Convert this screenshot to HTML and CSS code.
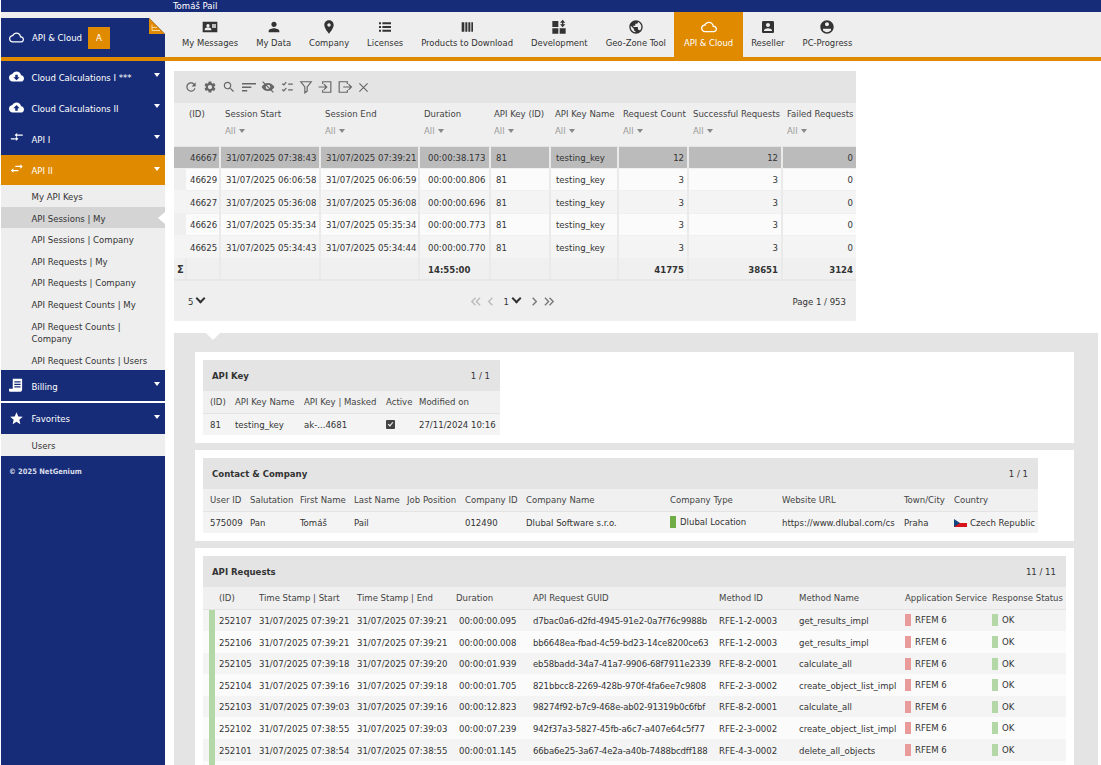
FILE: index.html
```html
<!DOCTYPE html>
<html lang="en">
<head>
    <meta charset="UTF-8">
    <title>API Sessions | My</title>
    <link rel="stylesheet" href="styles.css">
</head>
<body>
    <svg class="defs" width="0" height="0">
        <symbol id="i-cloud" viewBox="0 0 24 24"><path d="M19.35 10.04C18.67 6.59 15.64 4 12 4 9.11 4 6.6 5.64 5.35 8.04 2.34 8.36 0 10.91 0 14c0 3.31 2.69 6 6 6h13c2.76 0 5-2.24 5-5 0-2.64-2.05-4.78-4.65-4.96zM19 18H6c-2.21 0-4-1.79-4-4s1.79-4 4-4h.71C7.37 7.69 9.48 6 12 6c3.04 0 5.5 2.46 5.5 5.5v.5H19c1.66 0 3 1.34 3 3s-1.34 3-3 3z"/></symbol>
        <symbol id="i-down" viewBox="0 0 24 24"><path fill-rule="evenodd" d="M19.35 10.04C18.67 6.59 15.64 4 12 4 9.11 4 6.6 5.64 5.35 8.04 2.34 8.36 0 10.91 0 14c0 3.31 2.69 6 6 6h13c2.76 0 5-2.24 5-5 0-2.64-2.05-4.78-4.65-4.96zM17 13l-5 5-5-5h3V9h4v4h3z"/></symbol>
        <symbol id="i-up" viewBox="0 0 24 24"><path fill-rule="evenodd" d="M19.35 10.04C18.67 6.59 15.64 4 12 4 9.11 4 6.6 5.64 5.35 8.04 2.34 8.36 0 10.91 0 14c0 3.31 2.69 6 6 6h13c2.76 0 5-2.24 5-5 0-2.64-2.05-4.78-4.65-4.96zM14 13v4h-4v-4H7l5-5 5 5h-3z"/></symbol>
        <symbol id="i-merge" viewBox="0 0 24 24"><path d="M22 5.500h-9V3l-4 3.500 4 3.500V7.500h9zM3 11.500h8V9l4 3.500-4 3.500v-2.500H3z"/></symbol>
        <symbol id="i-swap" viewBox="0 0 24 24"><path d="M10 4.500h8V2l4 3.500L18 9V6.500h-8zM15 11H7V8.500L3 12l4 3.500V13h8z"/></symbol>
        <symbol id="i-bill" viewBox="0 0 24 24"><path fill-rule="evenodd" d="M6 1h15v17c0 2-1 4-3 4H2c-1.500 0-2-1-2-2v-3h6zM8.500 5v2h10V5zM8.500 9v2h10V9zM8.500 13v2h10v-2z"/></symbol>
        <symbol id="i-star" viewBox="0 0 24 24"><path d="M12 17.27L18.18 21l-1.64-7.03L22 9.24l-7.19-.61L12 2 9.19 8.63 2 9.24l5.46 4.73L5.82 21z"/></symbol>
        <symbol id="i-msg" viewBox="0 0 24 24"><path fill-rule="evenodd" d="M1 4h22v16H1zM9 7.500a2.500 2.500 0 1 0 .01 0zM4 17h10v-1.500c0-2-3-3-5-3s-5 1-5 3zM15 8v2h6V8zM15 11v2h6v-2z"/></symbol>
        <symbol id="i-person" viewBox="0 0 24 24"><path d="M12 12c2.21 0 4-1.79 4-4s-1.79-4-4-4-4 1.790-4 4 1.790 4 4 4zm0 2c-2.670 0-8 1.340-8 4v2h16v-2c0-2.660-5.330-4-8-4z"/></symbol>
        <symbol id="i-place" viewBox="0 0 24 24"><path d="M12 2C8.130 2 5 5.130 5 9c0 5.250 7 13 7 13s7-7.750 7-13c0-3.870-3.130-7-7-7zm0 9.500c-1.380 0-2.500-1.120-2.500-2.500s1.120-2.500 2.500-2.500 2.500 1.120 2.500 2.500-1.120 2.500-2.500 2.500z"/></symbol>
        <symbol id="i-list" viewBox="0 0 24 24"><path d="M3 5h3v3H3zM8 5h13v3H8zM3 10.500h3v3H3zM8 10.500h13v3H8zM3 16h3v3H3zM8 16h13v3H8z"/></symbol>
        <symbol id="i-columns" viewBox="0 0 24 24"><path d="M4 5h4v14H4zM9.500 5h3v14h-3zM14 5h3v14h-3zM18.500 5H21v14h-2.500z"/></symbol>
        <symbol id="i-dev" viewBox="0 0 24 24"><path d="M2 3h9v9H2zM2 14h9v8H2zM13 14h9v8h-9zM17.500 1l4 4.500h-3V8h3l-4 4.500-4-4.500h3V5.500h-3z"/></symbol>
        <symbol id="i-globe" viewBox="0 0 24 24"><path d="M12 2C6.480 2 2 6.480 2 12s4.480 10 10 10 10-4.480 10-10S17.520 2 12 2zm-1 17.930c-3.950-.490-7-3.850-7-7.930 0-.620.080-1.210.210-1.790L9 15v1c0 1.100.900 2 2 2v1.930zm6.900-2.540c-.260-.810-1-1.390-1.900-1.390h-1v-3c0-.550-.450-1-1-1H8v-2h2c.550 0 1-.450 1-1V7h2c1.100 0 2-.900 2-2v-.410c2.930 1.190 5 4.060 5 7.410 0 2.080-.800 3.970-2.100 5.390z"/></symbol>
        <symbol id="i-box" viewBox="0 0 24 24"><path d="M3 5v14c0 1.100.890 2 2 2h14c1.100 0 2-.900 2-2V5c0-1.100-.900-2-2-2H5c-1.110 0-2 .900-2 2zm12 4c0 1.660-1.340 3-3 3s-3-1.340-3-3 1.340-3 3-3 3 1.340 3 3zm-9 8c0-2 4-3.100 6-3.100s6 1.100 6 3.100v1H6v-1z"/></symbol>
        <symbol id="i-account" viewBox="0 0 24 24"><path fill-rule="evenodd" d="M12 2C6.480 2 2 6.480 2 12s4.480 10 10 10 10-4.480 10-10S17.520 2 12 2zm0 3c1.660 0 3 1.340 3 3s-1.340 3-3 3-3-1.340-3-3 1.340-3 3-3zM6 14.500h12v2.500c-1.300 1.700-3.500 2.700-6 2.700s-4.700-1-6-2.700z"/></symbol>
        <symbol id="i-refresh" viewBox="0 0 24 24"><path d="M17.650 6.350C16.200 4.900 14.210 4 12 4c-4.420 0-7.990 3.580-7.990 8s3.570 8 7.990 8c3.730 0 6.840-2.550 7.730-6h-2.080c-.820 2.330-3.040 4-5.650 4-3.310 0-6-2.690-6-6s2.690-6 6-6c1.660 0 3.140.690 4.220 1.780L13 11h7V4l-2.350 2.350z"/></symbol>
        <symbol id="i-gear" viewBox="0 0 24 24"><path d="M19.140 12.940c.040-.3.060-.610.060-.940 0-.320-.020-.640-.070-.940l2.030-1.580c.180-.140.230-.410.120-.610l-1.920-3.320c-.120-.220-.370-.290-.590-.220l-2.390.960c-.5-.380-1.030-.7-1.620-.94l-.360-2.540c-.040-.240-.240-.410-.480-.410h-3.840c-.240 0-.430.170-.470.410l-.360 2.540c-.590.240-1.130.570-1.620.94l-2.390-.960c-.220-.080-.470 0-.590.220L2.740 8.870c-.120.210-.080.470.120.610l2.030 1.580c-.050.3-.090.630-.090.940s.020.640.070.940l-2.030 1.580c-.180.140-.230.410-.120.610l1.920 3.320c.120.220.370.290.590.220l2.390-.960c.5.380 1.030.7 1.620.94l.360 2.540c.050.240.240.410.480.410h3.840c.240 0 .440-.170.470-.410l.360-2.540c.590-.240 1.130-.560 1.620-.94l2.390.96c.220.080.470 0 .590-.220l1.920-3.320c.120-.220.070-.470-.120-.610l-2.010-1.580zM12 15.600c-1.980 0-3.600-1.620-3.600-3.600s1.620-3.600 3.600-3.600 3.600 1.620 3.600 3.600-1.620 3.600-3.600 3.600z"/></symbol>
        <symbol id="i-search" viewBox="0 0 24 24"><path d="M15.500 14h-.790l-.280-.270C15.410 12.590 16 11.110 16 9.500 16 5.910 13.090 3 9.500 3S3 5.910 3 9.500 5.910 16 9.500 16c1.610 0 3.090-.590 4.230-1.570l.270.280v.790l5 4.990L20.490 19l-4.990-5zm-6 0C7.010 14 5 11.990 5 9.500S7.010 5 9.500 5 14 7.010 14 9.500 11.990 14 9.500 14z"/></symbol>
        <symbol id="i-sort" viewBox="0 0 24 24"><path d="M0 5h24v2.500H0zM0 11h16v2.500H0zM0 17h9v2.500H0z"/></symbol>
        <symbol id="i-eye" viewBox="0 0 24 24"><path fill-rule="evenodd" d="M12 5C7 5 3 8 1 12c2 4 6 7 11 7s9-3 11-7c-2-4-6-7-11-7zm0 3a4 4 0 1 1 0 8 4 4 0 0 1 0-8z"/><path d="M3.500 2L22 20.500 20.500 22 2 3.500z"/></symbol>
        <symbol id="i-check" viewBox="0 0 24 24"><path d="M3 7l2-1.500 1.500 1.500L10 3l1.500 1.500-5 5.500zM3 17l2-1.500 1.500 1.500L10 13l1.500 1.500-5 5.500zM14 6h8v2h-8zM14 16h8v2h-8z"/></symbol>
        <symbol id="i-filter" viewBox="0 0 24 24"><path fill="none" stroke="currentColor" stroke-width="2" d="M3 3h18l-7 9v7l-4 3V12z"/></symbol>
        <symbol id="i-login" viewBox="0 0 24 24"><path fill="none" stroke="currentColor" stroke-width="2" d="M8 7V3h14v18H8v-4M1 12h13M10 7l5 5-5 5"/></symbol>
        <symbol id="i-logout" viewBox="0 0 24 24"><path fill="none" stroke="currentColor" stroke-width="2" d="M16 7V3H2v18h14v-4M9 12h13M18 7l5 5-5 5"/></symbol>
        <symbol id="i-close" viewBox="0 0 24 24"><path fill="none" stroke="currentColor" stroke-width="2.500" d="M3 3l18 18M21 3L3 21"/></symbol>
        <symbol id="i-first" viewBox="0 0 12 12"><path fill="none" stroke="currentColor" stroke-width="1.500" d="M6 2L2 6l4 4M11 2L7 6l4 4"/></symbol>
        <symbol id="i-prev" viewBox="0 0 12 12"><path fill="none" stroke="currentColor" stroke-width="1.500" d="M8 2L4 6l4 4"/></symbol>
        <symbol id="i-next" viewBox="0 0 12 12"><path fill="none" stroke="currentColor" stroke-width="1.500" d="M4 2l4 4-4 4"/></symbol>
        <symbol id="i-last" viewBox="0 0 12 12"><path fill="none" stroke="currentColor" stroke-width="1.500" d="M1 2l4 4-4 4M6 2l4 4-4 4"/></symbol>
    </svg>

    <div class="topbar">Tomáš Pail</div>

    <div class="header">
        <div class="brand">
            <svg class="brand-icon"><use href="#i-cloud"/></svg>
            <span>API &amp; Cloud</span>
            <span class="brand-badge">A</span>
            <svg class="brand-fold" viewBox="0 0 16 16"><path fill="#eeeeee" d="M0 0h16v16z"/><path fill="#e08a00" d="M0 0l16 16H0z"/><path fill="none" stroke="#f6d59a" d="M3 6.500v6M3 9.500h5M3 12.500h8"/></svg>
        </div>
        <div class="nav">
            <a class="nav-item"><svg><use href="#i-msg"/></svg>My Messages</a>
            <a class="nav-item"><svg><use href="#i-person"/></svg>My Data</a>
            <a class="nav-item"><svg><use href="#i-place"/></svg>Company</a>
            <a class="nav-item"><svg><use href="#i-list"/></svg>Licenses</a>
            <a class="nav-item"><svg><use href="#i-columns"/></svg>Products to Download</a>
            <a class="nav-item"><svg><use href="#i-dev"/></svg>Development</a>
            <a class="nav-item"><svg><use href="#i-globe"/></svg>Geo-Zone Tool</a>
            <a class="nav-item active"><svg><use href="#i-cloud"/></svg>API &amp; Cloud</a>
            <a class="nav-item"><svg><use href="#i-box"/></svg>Reseller</a>
            <a class="nav-item"><svg><use href="#i-account"/></svg>PC-Progress</a>
        </div>
    </div>

    <div class="layout">
        <div class="sidebar">
            <div class="menu-item"><svg><use href="#i-down"/></svg>Cloud Calculations I ***<i class="caret"></i></div>
            <div class="menu-item"><svg><use href="#i-up"/></svg>Cloud Calculations II<i class="caret"></i></div>
            <div class="menu-item tall"><svg><use href="#i-merge"/></svg>API I<i class="caret"></i></div>
            <div class="menu-item short open"><svg><use href="#i-swap"/></svg>API II<i class="caret"></i></div>
            <div class="submenu">
                <div class="sub-item">My API Keys</div>
                <div class="sub-item selected">API Sessions | My</div>
                <div class="sub-item">API Sessions | Company</div>
                <div class="sub-item">API Requests | My</div>
                <div class="sub-item">API Requests | Company</div>
                <div class="sub-item">API Request Counts | My</div>
                <div class="sub-item wrap">API Request Counts | Company</div>
                <div class="sub-item">API Request Counts | Users</div>
            </div>
            <div class="menu-item"><svg><use href="#i-bill"/></svg>Billing<i class="caret"></i></div>
            <div class="menu-item gap"><svg><use href="#i-star"/></svg>Favorites<i class="caret"></i></div>
            <div class="submenu">
                <div class="sub-item">Users</div>
            </div>
            <div class="copyright">© 2025 NetGenium</div>
        </div>

        <div class="content">
            <div class="grid">
                <div class="toolbar">
                    <svg><use href="#i-refresh"/></svg>
                    <svg><use href="#i-gear"/></svg>
                    <svg><use href="#i-search"/></svg>
                    <svg><use href="#i-sort"/></svg>
                    <svg><use href="#i-eye"/></svg>
                    <svg><use href="#i-check"/></svg>
                    <svg><use href="#i-filter"/></svg>
                    <svg><use href="#i-login"/></svg>
                    <svg><use href="#i-logout"/></svg>
                    <svg class="toolbar-close"><use href="#i-close"/></svg>
                </div>
                <table class="sessions">
                    <colgroup>
                        <col class="w12"><col class="w34"><col class="w100"><col class="w99"><col class="w71"><col class="w60"><col class="w68"><col class="w70"><col class="w94"><col class="w74">
                    </colgroup>
                    <thead>
                        <tr>
                            <th></th>
                            <th class="tight">(ID)<span class="filter"></span></th>
                            <th>Session Start<span class="filter">All<i></i></span></th>
                            <th>Session End<span class="filter">All<i></i></span></th>
                            <th>Duration<span class="filter">All<i></i></span></th>
                            <th class="narrow">API Key (ID)<span class="filter">All<i></i></span></th>
                            <th>API Key Name<span class="filter">All<i></i></span></th>
                            <th>Request Count<span class="filter">All<i></i></span></th>
                            <th>Successful Requests<span class="filter">All<i></i></span></th>
                            <th>Failed Requests<span class="filter">All<i></i></span></th>
                        </tr>
                    </thead>
                    <tbody>
                        <tr class="current"><td class="gutter"></td><td class="id">46667</td><td>31/07/2025 07:38:43</td><td>31/07/2025 07:39:21</td><td class="dur">00:00:38.173</td><td>81</td><td>testing_key</td><td class="num">12</td><td class="num">12</td><td class="num">0</td></tr>
                        <tr><td class="gutter"></td><td class="id">46629</td><td>31/07/2025 06:06:58</td><td>31/07/2025 06:06:59</td><td class="dur">00:00:00.806</td><td>81</td><td>testing_key</td><td class="num">3</td><td class="num">3</td><td class="num">0</td></tr>
                        <tr class="high"><td class="gutter"></td><td class="id">46627</td><td>31/07/2025 05:36:08</td><td>31/07/2025 05:36:08</td><td class="dur">00:00:00.696</td><td>81</td><td>testing_key</td><td class="num">3</td><td class="num">3</td><td class="num">0</td></tr>
                        <tr><td class="gutter"></td><td class="id">46626</td><td>31/07/2025 05:35:34</td><td>31/07/2025 05:35:34</td><td class="dur">00:00:00.773</td><td>81</td><td>testing_key</td><td class="num">3</td><td class="num">3</td><td class="num">0</td></tr>
                        <tr class="high"><td class="gutter"></td><td class="id">46625</td><td>31/07/2025 05:34:43</td><td>31/07/2025 05:34:44</td><td class="dur">00:00:00.770</td><td>81</td><td>testing_key</td><td class="num">3</td><td class="num">3</td><td class="num">0</td></tr>
                        <tr class="sum"><td class="sigma">Σ</td><td></td><td></td><td></td><td class="dur">14:55:00</td><td></td><td></td><td class="num">41775</td><td class="num">38651</td><td class="num">3124</td></tr>
                    </tbody>
                </table>
                <div class="pager">
                    <span class="pager-size">5<i class="chev"></i></span>
                    <span class="pager-links">
                        <svg class="off"><use href="#i-first"/></svg>
                        <svg class="off"><use href="#i-prev"/></svg>
                        <span class="pager-page">1<i class="chev"></i></span>
                        <svg><use href="#i-next"/></svg>
                        <svg><use href="#i-last"/></svg>
                    </span>
                    <span class="pager-info">Page 1 / 953</span>
                </div>
            </div>

            <div class="details">
                <div class="card">
                    <div class="block key-block">
                        <div class="block-title"><b>API Key</b><span>1 / 1</span></div>
                        <table class="data">
                            <colgroup><col class="w28"><col class="w69"><col class="w82"><col class="w33"><col class="w85"></colgroup>
                            <thead><tr><th class="first">(ID)</th><th>API Key Name</th><th>API Key | Masked</th><th>Active</th><th>Modified on</th></tr></thead>
                            <tbody><tr><td class="first">81</td><td>testing_key</td><td>ak-...4681</td><td><span class="checkbox"></span></td><td>27/11/2024 10:16</td></tr></tbody>
                        </table>
                    </div>
                </div>
                <div class="card">
                    <div class="block contact-block">
                        <div class="block-title"><b>Contact &amp; Company</b><span>1 / 1</span></div>
                        <table class="data">
                            <colgroup><col class="w43"><col class="w50"><col class="w54"><col class="w53"><col class="w58"><col class="w61"><col class="w144"><col class="w112"><col class="w122"><col class="w50"><col class="w88"></colgroup>
                            <thead><tr><th class="first">User ID</th><th>Salutation</th><th>First Name</th><th>Last Name</th><th>Job Position</th><th>Company ID</th><th>Company Name</th><th>Company Type</th><th>Website URL</th><th>Town/City</th><th>Country</th></tr></thead>
                            <tbody><tr><td class="first">575009</td><td>Pan</td><td>Tomáš</td><td>Pail</td><td></td><td>012490</td><td>Dlubal Software s.r.o.</td><td><span class="swatch strong"></span>Dlubal Location</td><td class="url">https://www.dlubal.com/cs</td><td>Praha</td><td><svg class="flag" viewBox="0 0 13 8"><path fill="#f4f4f4" d="M0 0h13v4H0z"/><path fill="#d7141a" d="M0 4h13v4H0z"/><path fill="#11457e" d="M0 0l6 4-6 4z"/></svg>Czech Republic</td></tr></tbody>
                        </table>
                    </div>
                </div>
                <div class="card">
                    <div class="block requests-block">
                        <div class="block-title"><b>API Requests</b><span>11 / 11</span></div>
                        <table class="data">
                            <colgroup><col class="w6"><col class="w6"><col class="w40"><col class="w98"><col class="w99"><col class="w77"><col class="w186"><col class="w80"><col class="w106"><col class="w87"><col class="w78"></colgroup>
                            <thead><tr><th class="plain"></th><th class="plain"></th><th>(ID)</th><th>Time Stamp | Start</th><th>Time Stamp | End</th><th>Duration</th><th>API Request GUID</th><th>Method ID</th><th>Method Name</th><th>Application Service</th><th>Response Status</th></tr></thead>
                            <tbody>
                                <tr><td class="plain"></td><td class="bar"></td><td>252107</td><td>31/07/2025 07:39:21</td><td>31/07/2025 07:39:21</td><td class="dur">00:00:00.095</td><td class="guid">d7bac0a6-d2fd-4945-91e2-0a7f76c9988b</td><td>RFE-1-2-0003</td><td>get_results_impl</td><td><span class="swatch red"></span>RFEM 6</td><td><span class="swatch green"></span>OK</td></tr>
                                <tr><td class="plain"></td><td class="bar"></td><td>252106</td><td>31/07/2025 07:39:21</td><td>31/07/2025 07:39:21</td><td class="dur">00:00:00.008</td><td class="guid">bb6648ea-fbad-4c59-bd23-14ce8200ce63</td><td>RFE-1-2-0003</td><td>get_results_impl</td><td><span class="swatch red"></span>RFEM 6</td><td><span class="swatch green"></span>OK</td></tr>
                                <tr class="low"><td class="plain"></td><td class="bar"></td><td>252105</td><td>31/07/2025 07:39:18</td><td>31/07/2025 07:39:20</td><td class="dur">00:00:01.939</td><td class="guid">eb58badd-34a7-41a7-9906-68f7911e2339</td><td>RFE-8-2-0001</td><td>calculate_all</td><td><span class="swatch red"></span>RFEM 6</td><td><span class="swatch green"></span>OK</td></tr>
                                <tr><td class="plain"></td><td class="bar"></td><td>252104</td><td>31/07/2025 07:39:16</td><td>31/07/2025 07:39:18</td><td class="dur">00:00:01.705</td><td class="guid">821bbcc8-2269-428b-970f-4fa6ee7c9808</td><td>RFE-2-3-0002</td><td>create_object_list_impl</td><td><span class="swatch red"></span>RFEM 6</td><td><span class="swatch green"></span>OK</td></tr>
                                <tr class="low"><td class="plain"></td><td class="bar"></td><td>252103</td><td>31/07/2025 07:39:03</td><td>31/07/2025 07:39:16</td><td class="dur">00:00:12.823</td><td class="guid">98274f92-b7c9-468e-ab02-91319b0c6fbf</td><td>RFE-8-2-0001</td><td>calculate_all</td><td><span class="swatch red"></span>RFEM 6</td><td><span class="swatch green"></span>OK</td></tr>
                                <tr><td class="plain"></td><td class="bar"></td><td>252102</td><td>31/07/2025 07:38:55</td><td>31/07/2025 07:39:03</td><td class="dur">00:00:07.239</td><td class="guid">942f37a3-5827-45fb-a6c7-a407e64c5f77</td><td>RFE-2-3-0002</td><td>create_object_list_impl</td><td><span class="swatch red"></span>RFEM 6</td><td><span class="swatch green"></span>OK</td></tr>
                                <tr><td class="plain"></td><td class="bar"></td><td>252101</td><td>31/07/2025 07:38:54</td><td>31/07/2025 07:38:55</td><td class="dur">00:00:01.145</td><td class="guid">66ba6e25-3a67-4e2a-a40b-7488bcdff188</td><td>RFE-4-3-0002</td><td>delete_all_objects</td><td><span class="swatch red"></span>RFEM 6</td><td><span class="swatch green"></span>OK</td></tr>
                                <tr><td class="plain"></td><td class="bar"></td><td></td><td></td><td></td><td></td><td></td><td></td><td></td><td></td><td></td></tr>
                            </tbody>
                        </table>
                    </div>
                </div>
            </div>
        </div>
    </div>
</body>
</html>
```

FILE: styles.css
```css
html, body {
    height: 100%;
    overflow: hidden;
}
body {
    margin: 0;
    padding-left: 1px;
    background: #fff;
    color: #333;
    font-family: "DejaVu Sans", Verdana, sans-serif;
    font-stretch: condensed;
    font-size: 9.5px;
    box-sizing: border-box;
}
.defs {
    position: absolute;
}
svg {
    fill: currentColor;
}

/* top */
.topbar {
    height: 12px;
    background: #172c78;
    color: #fff;
    padding-left: 172px;
    line-height: 11px;
    overflow: hidden;
}
.header {
    display: flex;
    height: 45px;
    background: #eee;
    box-shadow: 0 4px 0 #e08a00;
    position: relative;
}
.brand {
    width: 164px;
    margin-top: 6px;
    background: #172c78;
    color: #fff;
    display: flex;
    align-items: center;
    position: relative;
    box-sizing: border-box;
    padding-left: 8px;
}
.brand-icon {
    width: 15px;
    height: 15px;
    margin-right: 8px;
}
.brand-badge {
    width: 22px;
    height: 22px;
    margin-left: 6px;
    background: #e08a00;
    display: flex;
    align-items: center;
    justify-content: center;
}
.brand-fold {
    position: absolute;
    top: 0;
    right: 0;
    width: 16px;
    height: 16px;
}
.nav {
    display: flex;
    padding-left: 8px;
    font-size: 9.35px;
}
.nav-item {
    display: flex;
    flex-direction: column;
    align-items: center;
    padding: 7px 9px 0;
    color: #333;
    white-space: nowrap;
}
.nav-item svg {
    width: 16px;
    height: 16px;
    margin-bottom: 2px;
}
.nav-item.active {
    background: #e08a00;
    color: #fff;
    margin: 0 -1px;
    padding: 7px 10px 0;
}

/* sidebar */
.layout {
    display: flex;
    margin-top: 4px;
    height: 704px;
}
.sidebar {
    width: 164px;
    flex-shrink: 0;
    background: #172c78;
    color: #fff;
}
.menu-item {
    height: 31px;
    display: flex;
    align-items: center;
    padding: 1px 0 0 30.5px;
    position: relative;
    box-sizing: border-box;
}
.menu-item svg {
    position: absolute;
    left: 8px;
    top: 8px;
    width: 15px;
    height: 15px;
}
.menu-item.tall {
    height: 32px;
}
.menu-item.short {
    height: 30px;
}
.menu-item.open {
    background: #e08a00;
}
.menu-item.gap {
    border-top: 2px solid #fff;
    height: 33px;
    padding-top: 0;
}
.caret {
    position: absolute;
    right: 5px;
    top: 12px;
    border: 3px solid transparent;
    border-top: 4px solid #fff;
}
.submenu {
    background: #eee;
    color: #333;
}
.sub-item {
    height: 21.5px;
    line-height: 23px;
    padding-left: 30.5px;
    position: relative;
}
.sub-item.wrap {
    height: 34.5px;
    line-height: 12px;
    padding: 6.5px 30px 0 30.5px;
    box-sizing: border-box;
}
.sub-item.selected {
    background: #d4d4d4;
}
.sub-item.selected::after {
    content: "";
    position: absolute;
    right: 0;
    top: 5px;
    border: 6px solid transparent;
    border-right: 7px solid #fff;
    border-left: 0;
}
.copyright {
    padding: 11px 0 0 8px;
    font-size: 7.5px;
    font-weight: bold;
    color: #d8dcea;
}

/* sessions grid */
.content {
    flex: 1;
    padding: 10px 0 0 9px;
}
.grid {
    width: 682px;
    background: #efefef;
    margin-bottom: 12px;
}
.toolbar {
    height: 32px;
    background: #e4e4e4;
    display: flex;
    align-items: center;
    gap: 5.2px;
    padding-left: 10px;
    color: #666;
}
.toolbar svg {
    width: 14px;
    height: 14px;
}
.toolbar svg.toolbar-close {
    width: 11px;
    height: 11px;
    margin-left: 1px;
}
table {
    border-collapse: collapse;
    table-layout: fixed;
    width: 100%;
}
.sessions thead th {
    height: 43px;
    vertical-align: top;
    padding: 5px 0 0 5px;
    font-weight: normal;
    text-align: left;
    line-height: 12px;
    white-space: nowrap;
    color: #444;
    border-bottom: 1px solid #e4e4e4;
    box-sizing: border-box;
}
.sessions th.tight {
    padding-left: 3px;
}
.sessions th.narrow {
    padding-left: 4px;
}
.filter {
    display: block;
    margin-top: 5px;
    color: #999;
}
.filter i {
    display: inline-block;
    margin-left: 3px;
    border: 3px solid transparent;
    border-top: 4px solid #888;
    border-bottom: 0;
    vertical-align: 1px;
}
.sessions td {
    height: 22px;
    padding: 1px 0 0 5px;
    border-left: 2px solid #eaeaea;
    border-bottom: 1px solid #f0f0f0;
    white-space: nowrap;
    box-sizing: border-box;
    background: #fbfbfb;
}
.sessions tr.high td {
    height: 23px;
}
.sessions tbody tr:nth-child(odd) td {
    background: #f4f4f4;
}
.sessions tbody tr.current td {
    background: #bbb;
}
.sessions tbody td.gutter {
    background: #efefef;
    border: 0;
}
.sessions td.id {
    border-left: 0;
    padding-left: 4px;
}
.sessions td.dur {
    padding-left: 8px;
}
.sessions td.num {
    text-align: right;
    padding-right: 3px;
}
.sessions tbody tr.sum td {
    background: #f0f0f0;
    font-weight: bold;
    border-bottom: 2px solid #e8e8e8;
}
.sessions tr.sum td.sigma {
    padding-left: 3px;
    border-left: 0;
    font-size: 11px;
}
.pager {
    height: 40px;
    display: flex;
    align-items: center;
    justify-content: space-between;
    padding: 0 10px 0 14px;
    position: relative;
}
.chev {
    display: inline-block;
    width: 5px;
    height: 5px;
    margin-left: 4px;
    border-right: 2px solid #333;
    border-bottom: 2px solid #333;
    transform: rotate(45deg);
    vertical-align: 3px;
}
.pager-links {
    position: absolute;
    left: 296px;
    display: flex;
    align-items: center;
    gap: 4px;
    color: #777;
}
.pager-links svg {
    width: 11px;
    height: 11px;
}
.pager-links .off {
    color: #bbb;
}
.pager-page {
    color: #333;
    width: 24.5px;
    padding-left: 3.5px;
    box-sizing: border-box;
}

/* details panel */
.details {
    width: 924px;
    background: #e4e4e4;
    padding: 19px 24px 0 21px;
    box-sizing: border-box;
    position: relative;
}
.details::before {
    content: "";
    position: absolute;
    left: 32px;
    top: 0;
    border: 7px solid transparent;
    border-top: 7px solid #fff;
    border-bottom: 0;
}
.card {
    background: #fff;
    padding: 8px;
    margin-bottom: 7px;
}
.block-title {
    height: 31px;
    background: #e4e4e4;
    display: flex;
    align-items: center;
    justify-content: space-between;
    padding: 0 10px 0 9px;
}
.key-block {
    width: 297px;
}
.contact-block {
    width: 835px;
}
.data th {
    height: 22px;
    background: #f0f0f0;
    border-bottom: 1px solid #e4e4e4;
    font-weight: normal;
    text-align: left;
    padding: 0 0 0 4px;
    color: #444;
    white-space: nowrap;
    box-sizing: border-box;
}
.data td {
    height: 22px;
    background: #f4f4f4;
    padding: 0 0 0 4px;
    white-space: nowrap;
    overflow: hidden;
    box-sizing: border-box;
}
.data .first {
    padding-left: 7px;
}
.requests-block tr.low td {
    height: 21px;
}
.requests-block tbody tr:nth-child(even) td {
    background: #fbfbfb;
}
.requests-block td.dur {
    padding-left: 7px;
}
.requests-block td.guid {
    letter-spacing: -0.14px;
}
.requests-block td.plain, .requests-block th.plain {
    padding: 0;
}
.requests-block tbody tr td.bar, .requests-block tbody tr:nth-child(even) td.bar {
    background: #b4d7a8;
    padding: 0;
}
.checkbox {
    display: inline-block;
    width: 9px;
    height: 9px;
    background: #444;
    border-radius: 1px;
    position: relative;
    vertical-align: -1px;
}
.checkbox::after {
    content: "";
    position: absolute;
    left: 3px;
    top: 1px;
    width: 2px;
    height: 4px;
    border-right: 1.5px solid #fff;
    border-bottom: 1.5px solid #fff;
    transform: rotate(40deg);
}
.swatch {
    display: inline-block;
    width: 6px;
    height: 12px;
    margin-right: 4px;
    vertical-align: -3px;
}
.swatch.strong {
    background: #70ad47;
}
.swatch.red {
    background: #e99a9a;
}
.swatch.green {
    background: #b4d7a8;
}
.flag {
    width: 13px;
    height: 8px;
    margin-right: 3px;
    vertical-align: -1px;
}

/* column widths */
.w6 { width: 6px; }
.w12 { width: 12px; }
.w28 { width: 28px; }
.w33 { width: 33px; }
.w34 { width: 34px; }
.w40 { width: 40px; }
.w43 { width: 43px; }
.w50 { width: 50px; }
.w53 { width: 53px; }
.w54 { width: 54px; }
.w58 { width: 58px; }
.w60 { width: 60px; }
.w61 { width: 61px; }
.w68 { width: 68px; }
.w69 { width: 69px; }
.w70 { width: 70px; }
.w71 { width: 71px; }
.w74 { width: 74px; }
.w77 { width: 77px; }
.w78 { width: 78px; }
.w80 { width: 80px; }
.w82 { width: 82px; }
.w85 { width: 85px; }
.w87 { width: 87px; }
.w88 { width: 88px; }
.w94 { width: 94px; }
.w98 { width: 98px; }
.w99 { width: 99px; }
.w100 { width: 100px; }
.w106 { width: 106px; }
.w112 { width: 112px; }
.w122 { width: 122px; }
.w144 { width: 144px; }
.w186 { width: 186px; }
```
